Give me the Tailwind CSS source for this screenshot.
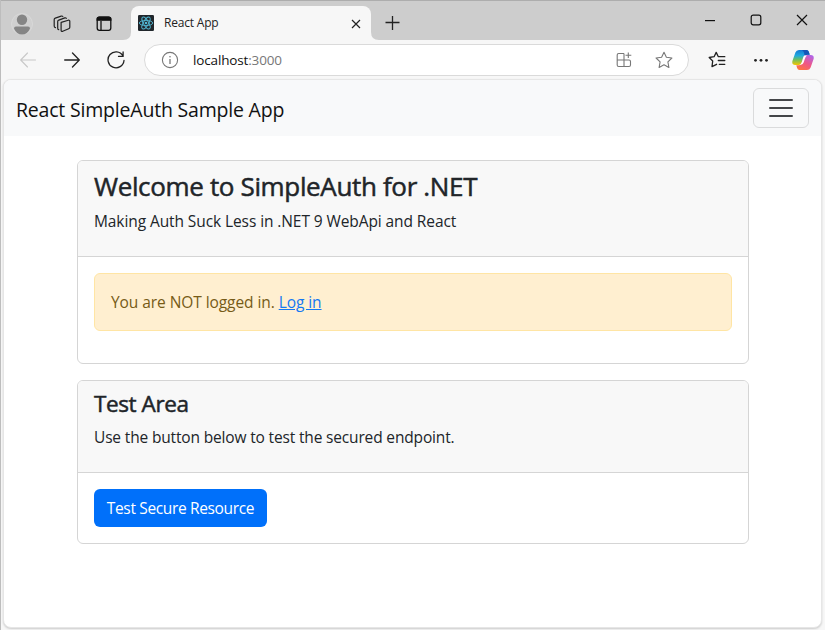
<!DOCTYPE html>
<html lang="en">
<head>
<meta charset="utf-8">
<title>React App</title>
<script src="https://cdn.jsdelivr.net/npm/@tailwindcss/browser@4"></script>
</head>
<body class="w-[825px] h-[630px] overflow-hidden bg-[#f7f7f7] font-['Open_Sans','Noto_Sans',sans-serif] text-[#212529]">
<div class="flex h-[630px] flex-col border-l border-[#bdbdbd]">
  <!-- Title bar -->
  <header class="flex h-10 shrink-0 border-t border-[#adadad] bg-[#cdcdcd]">
    <div class="flex w-[130px] items-center pt-[6px]">
      <svg class="ml-[10px] size-[22px]" viewBox="0 0 22 22"><circle cx="11" cy="11" r="10.5" fill="#d0d0d0" stroke="#dadada" stroke-width=".8"/><circle cx="11" cy="6.800" r="5.200" fill="#858585"/><path d="M3 15.400Q3 13.500 5 13.500H17Q19 13.500 19 15.400Q16.500 21.500 11 21.500T3 15.400Z" fill="#858585"/></svg>
      <svg class="ml-[20px] size-[18px]" viewBox="0 0 18 18" fill="none" stroke="#222" stroke-width="1.2" stroke-linejoin="round" stroke-linecap="round"><path d="M8.200 7.400 15.300 5.200Q16.800 5 16.800 6.300V12.200Q16.800 13.300 15.700 13.700L9.700 16.300Q8.100 16.700 8.100 15.200V7.500Z"/><path d="M5.700 14.700Q4.700 14.600 4.700 13.300V6.600Q4.700 5.500 5.800 5.100L11.800 2.900Q13 2.600 13.300 3.400"/><path d="M2.500 12.600Q1.200 12.300 1.200 11V4.600Q1.200 3.500 2.300 3.100L8.200 1.100Q9.400.8 9.800 1.500"/></svg>
      <svg class="ml-[25px] size-[16px]" viewBox="0 0 16 16" fill="none" stroke="#111" stroke-width="1.300"><rect x="1.200" y="1.200" width="13.600" height="13.100" rx="2.200"/><path d="M1.200 3.400Q1.200 1.200 3.400 1.200H12.600Q14.800 1.200 14.800 3.400V4.200H1.200Z" fill="#111"/><path d="M5 5V14.300"/></svg>
    </div>
    <div class="relative mt-[5px] flex h-[34px] w-[240px] items-center rounded-t-[8px] bg-[#f7f7f7]">
      <svg class="absolute -left-2 bottom-0 size-2" viewBox="0 0 8 8"><path d="M8 0V8H0Q8 8 8 0Z" fill="#f7f7f7"/></svg>
      <svg class="absolute -right-2 bottom-0 size-2" viewBox="0 0 8 8"><path d="M0 0V8H8Q0 8 0 0Z" fill="#f7f7f7"/></svg>
      <svg class="ml-[7px] size-4" viewBox="0 0 16 16"><rect width="16" height="16" rx="1.300" fill="#20262b"/><g fill="none" stroke="#52b8d3" stroke-width=".9"><ellipse cx="8" cy="8" rx="6.700" ry="2.600"/><ellipse cx="8" cy="8" rx="6.700" ry="2.600" transform="rotate(60 8 8)"/><ellipse cx="8" cy="8" rx="6.700" ry="2.600" transform="rotate(120 8 8)"/></g><circle cx="8" cy="8" r="1.300" fill="#52b8d3"/></svg>
      <span class="ml-[10px] text-[12px] leading-4 tracking-[-0.2px] text-[#222]">React App</span>
      <svg class="mt-[2px] mr-[10px] ml-auto size-[10px]" viewBox="0 0 10 10" stroke="#222" stroke-width="1.200"><path d="m1 1 8 8M9 1 1 9"/></svg>
    </div>
    <svg class="mt-[14px] ml-[14px] size-4" viewBox="0 0 16 16" stroke="#222" stroke-width="1.300"><path d="M7.500 1V15M.5 7.500H14.500"/></svg>
    <div class="ml-auto flex pt-[13px] pr-[17px]">
      <svg class="size-3" viewBox="0 0 12 12" stroke="#111" stroke-width="1.200"><path d="M1 6.600H11"/></svg>
      <svg class="ml-[34px] size-3" viewBox="0 0 12 12" fill="none" stroke="#111" stroke-width="1.200"><rect x="1.200" y="1.200" width="9.600" height="9.600" rx="2"/></svg>
      <svg class="ml-[34px] size-3" viewBox="0 0 12 12" stroke="#111" stroke-width="1.200"><path d="m1 1 10 10M11 1 1 11"/></svg>
    </div>
  </header>

  <!-- Toolbar -->
  <div class="flex h-10 shrink-0 items-center">
    <svg class="ml-[19px] size-4" viewBox="0 0 16 16" fill="none" stroke="#c8c8c8" stroke-width="1.100" stroke-linecap="round" stroke-linejoin="round"><path d="M15.500 8H.7M7.500 1 .7 8l6.800 7"/></svg>
    <svg class="ml-[28px] size-4" viewBox="0 0 16 16" fill="none" stroke="#222" stroke-width="1.300" stroke-linecap="round" stroke-linejoin="round"><path d="M.7 8H15.300M8.500 1l6.800 7-6.800 7"/></svg>
    <svg class="ml-[27px] size-[18px]" viewBox="0 0 18 18" fill="none" stroke="#222" stroke-width="1.300" stroke-linecap="round" stroke-linejoin="round"><path d="M15.900 4.700A8 8 0 1 0 17 9.500M16.100 1V5.400H11.500"/></svg>
    <div class="ml-[19px] flex h-8 w-[545px] items-center rounded-full border border-[#dadada] bg-white">
      <svg class="ml-4 size-[18px]" viewBox="0 0 18 18" fill="none" stroke="#777" stroke-width="1.100"><circle cx="9" cy="9" r="7.600"/><path d="M9 8V13" stroke-width="1.300"/><circle cx="9" cy="5.700" r=".8" fill="#777" stroke="none"/></svg>
      <span class="ml-[14px] text-[13.500px] leading-5 tracking-[-0.15px] text-[#777]"><span class="text-[#111]">localhost</span>:3000</span>
      <svg class="ml-auto size-4" viewBox="0 0 16 16" fill="none" stroke="#777" stroke-width="1.100"><path d="M8 1.500H2.700Q1.200 1.500 1.200 3V13Q1.200 14.500 2.700 14.500H13Q14.500 14.500 14.500 13V9.500Q14.500 8 13 8H1.200M8 1.500V14.500M12.300 .5V6M9.500 3.200H15.300"/></svg>
      <svg class="mr-[15px] ml-[23px] size-[18px]" viewBox="0 0 18 18" fill="none" stroke="#777" stroke-width="1.100" stroke-linejoin="round"><path d="m9 1.300 2.400 5 5.500.7-4 3.900 1 5.600L9 13.800l-4.900 2.700 1-5.600L1.100 7l5.500-.7Z"/></svg>
    </div>
    <svg class="ml-[19px] size-[18px]" viewBox="0 0 18 18" fill="none" stroke="#222" stroke-width="1.300" stroke-linejoin="round" stroke-linecap="round"><path d="M11 5.700 10.200 5.500 8.200 1.400 6.100 5.700 1.200 6.500 4.700 10 4 15.700 8.600 13.300M11.500 5.700H16.800M10.300 9.500H16.800M11.300 13.300H16.800"/></svg>
    <svg class="ml-[27px] size-4" viewBox="0 0 16 16" fill="#222"><circle cx="2.500" cy="8.300" r="1.400"/><circle cx="8" cy="8.300" r="1.400"/><circle cx="13.500" cy="8.300" r="1.400"/></svg>
    <svg class="ml-[23px] size-[22px]" viewBox="0 0 22 22">
      <defs>
        <linearGradient id="copilot-blue" x1="0" y1="0" x2="0" y2="1"><stop offset="0" stop-color="#1478d4"/><stop offset=".38" stop-color="#20aade"/><stop offset=".62" stop-color="#66be68"/><stop offset="1" stop-color="#f5c500"/></linearGradient>
        <linearGradient id="copilot-pink" x1=".8" y1="0" x2=".2" y2="1"><stop offset="0" stop-color="#b166e8"/><stop offset=".5" stop-color="#ee5688"/><stop offset="1" stop-color="#ff743e"/></linearGradient>
      </defs>
      <path d="M7 1H14.500Q16.300 1 16.900 3L17.700 5.700H15.300Q13.300 5.700 12.700 7.600L10.700 13.800Q10 16 7.700 16H3.200Q-.4 16 .4 12L3.400 3.500Q4.300 1 7 1Z" fill="url(#copilot-blue)"/>
      <path d="M10 1H14.500Q16.300 1 16.900 3L17.700 5.700H15.300Q13 5.700 12.300 8Q13 3 10 1Z" fill="#1456b8"/>
      <path d="M15 21H7.500Q5.700 21 5.100 19L4.300 16.300H6.700Q8.700 16.300 9.300 14.400L11.300 8.200Q12 6 14.300 6H18.800Q22.400 6 21.600 10L18.600 18.500Q17.700 21 15 21Z" fill="url(#copilot-pink)"/>
      <path d="M12.300 6.500H15Q13.400 7.500 12.800 10L11.600 13.500Q11 15.600 9 15.800H7Q9 15.500 9.800 13L11 9Q11.500 7 12.300 6.500Z" fill="#fff"/>
    </svg>
  </div>

  <!-- Page -->
  <main class="-mt-px mr-[3px] ml-[2px] h-[549px] shrink-0 overflow-hidden rounded-[8px] border border-[#e6e6e6] bg-white shadow-[0_1px_2px_#ccc]">
    <nav class="flex h-[56px] items-center justify-between bg-[#f8f9fa] pr-3 pl-3">
      <span class="pt-[3px] text-[19.500px] leading-[30px] tracking-[-0.2px] whitespace-nowrap text-[#111]">React SimpleAuth Sample App</span>
      <button class="flex h-10 w-14 items-center justify-center rounded-[6px] border border-[#dadbdc]"><svg class="size-[30px]" viewBox="0 0 30 30" stroke="#444649" stroke-width="2" stroke-linecap="round"><path d="M4 7H26M4 15H26M4 23H26"/></svg></button>
    </nav>
    <div class="mt-6 ml-[73px] flex w-[672px] flex-col gap-4">
      <section class="h-[204px] overflow-hidden rounded-[6px] border border-[#d5d5d5]">
        <div class="h-[96px] border-b border-[#d5d5d5] bg-[#f8f8f8] px-4 pt-2">
          <h3 class="text-[26px] leading-[34px] tracking-[-0.35px] whitespace-nowrap [-webkit-text-stroke:0.5px_#212529]">Welcome to SimpleAuth for .NET</h3>
          <p class="mt-[6px] text-[15.500px] leading-6 tracking-[-0.09px] whitespace-nowrap">Making Auth Suck Less in .NET 9 WebApi and React</p>
        </div>
        <div class="p-4">
          <div class="flex h-[58px] items-center rounded-[6px] border border-[#ffe5a4] bg-[#ffefd0] px-4 pt-[2px] text-[15.500px] tracking-[-0.07px] text-[#765b17]"><span>You are NOT logged in. <a class="text-[#1578f2] underline">Log in</a></span></div>
        </div>
      </section>
      <section class="h-[164px] overflow-hidden rounded-[6px] border border-[#d5d5d5]">
        <div class="h-[92px] border-b border-[#d5d5d5] bg-[#f8f8f8] px-4 pt-2">
          <h4 class="text-[22.500px] leading-[30px] tracking-[-0.4px] [-webkit-text-stroke:0.5px_#212529]">Test Area</h4>
          <p class="mt-[6px] text-[15.500px] leading-6 tracking-[-0.16px]">Use the button below to test the secured endpoint.</p>
        </div>
        <div class="p-4">
          <button class="h-[38px] w-[173px] rounded-[6px] bg-[#0070fa] pt-[2px] text-[15.500px] tracking-[-0.35px] whitespace-nowrap text-white">Test Secure Resource</button>
        </div>
      </section>
    </div>
  </main>
</div>
</body>
</html>
